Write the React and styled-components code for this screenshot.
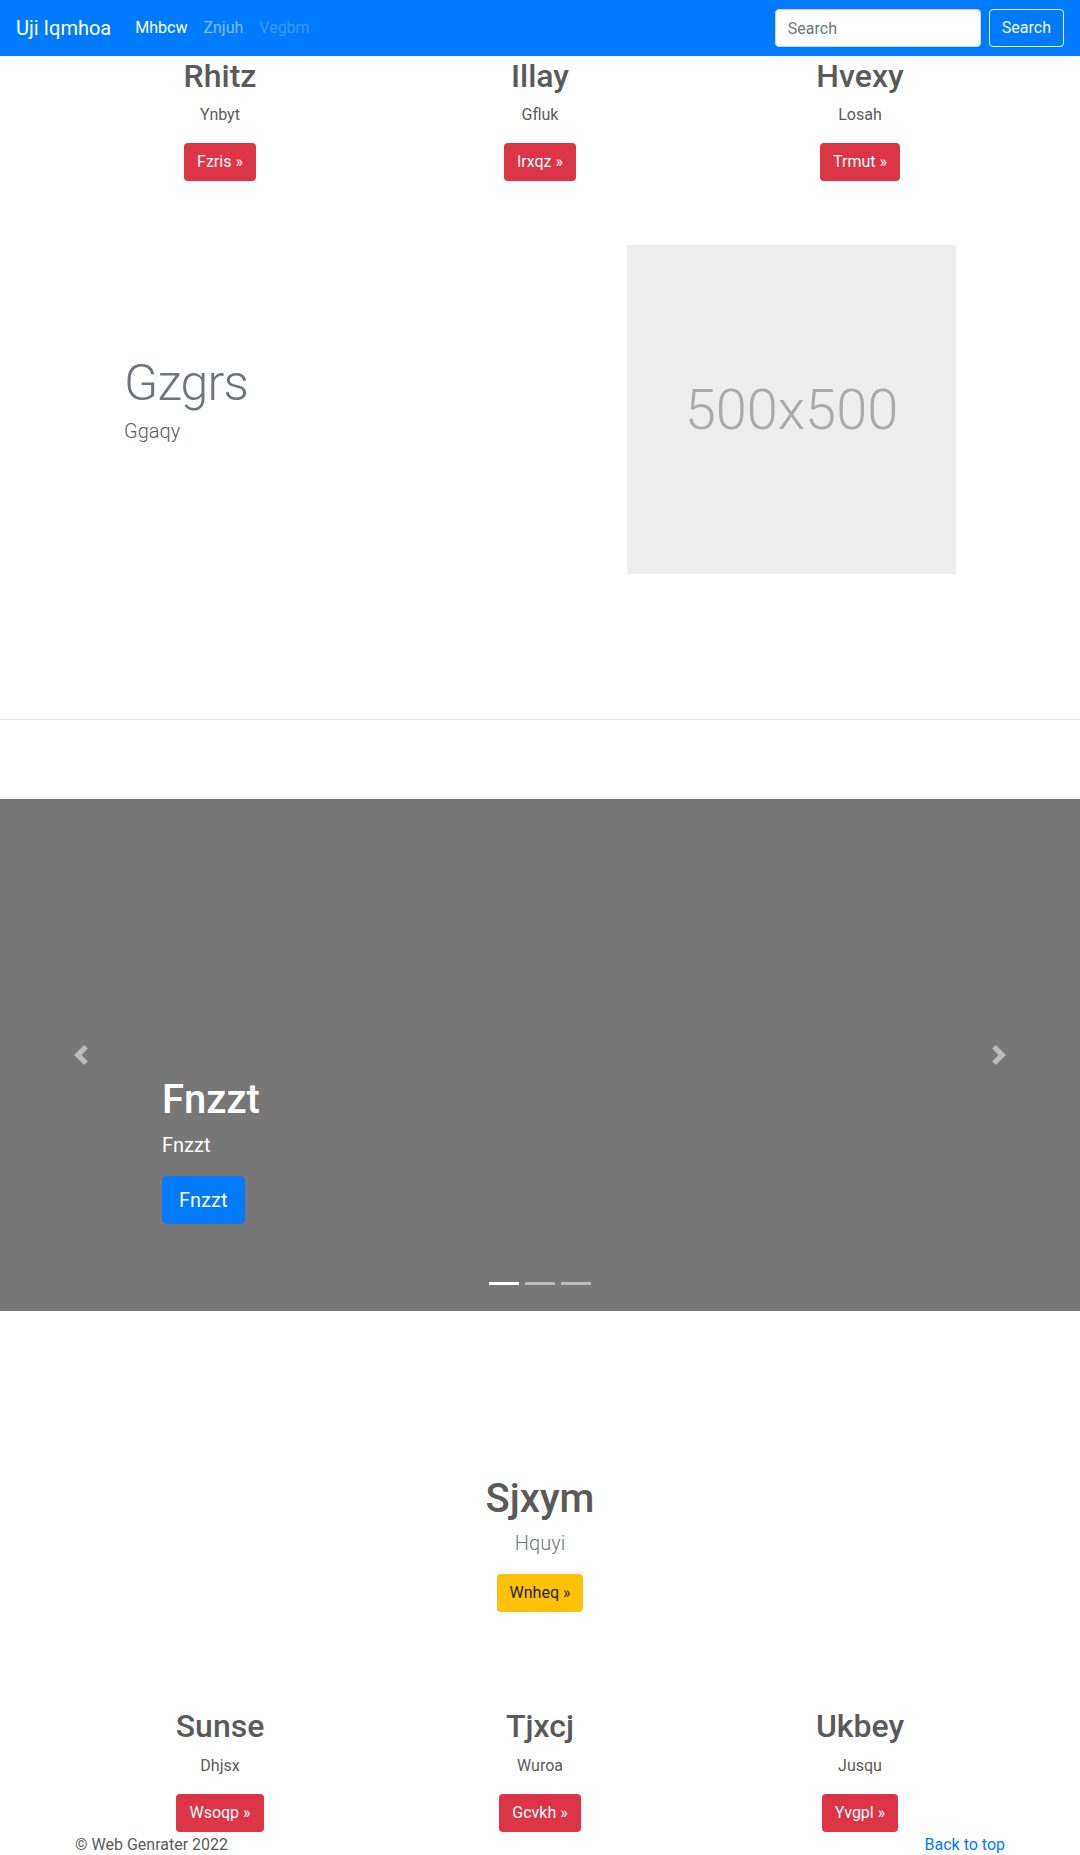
import React from "react";
import styled, { createGlobalStyle } from "styled-components";

const GlobalStyle = createGlobalStyle`
  * {
    box-sizing: border-box;
  }
  body {
    margin: 0;
    font-family: "Segoe UI", Roboto, "Helvetica Neue", Arial, sans-serif;
    font-size: 16px;
    line-height: 1.5;
    color: #5a5a5a;
    background: #fff;
  }
`;

const Navbar = styled.nav`
  display: flex;
  align-items: center;
  height: 56px;
  padding: 0 16px;
  background: #007bff;
`;

const Brand = styled.a`
  font-size: 20px;
  line-height: 30px;
  color: #fff;
  margin-right: 16px;
  text-decoration: none;
`;

const NavLink = styled.a`
  padding: 8px;
  color: ${(p) =>
    p.$state === "active"
      ? "#fff"
      : p.$state === "disabled"
      ? "rgba(255,255,255,.25)"
      : "rgba(255,255,255,.5)"};
  text-decoration: none;
`;

const SearchForm = styled.form`
  display: flex;
  gap: 8px;
  margin-left: auto;
`;

const SearchInput = styled.input`
  width: 206px;
  height: 38px;
  padding: 6px 12px;
  font: inherit;
  color: #495057;
  border: 1px solid #ced4da;
  border-radius: 4px;
  &::placeholder {
    color: #6c757d;
  }
`;

const OutlineButton = styled.button`
  height: 38px;
  padding: 6px 12px;
  font: inherit;
  color: #f8f9fa;
  background: transparent;
  border: 1px solid #f8f9fa;
  border-radius: 4px;
`;

const Container = styled.div`
  width: 960px;
  margin: 0 auto;
  padding: 0 15px;
`;

const Marketing = styled.div`
  display: grid;
  grid-template-columns: repeat(3, 1fr);
  margin: 0 -15px;
  padding-top: ${(p) => p.$top || 0}px;
  text-align: center;
`;

const Column = styled.div`
  padding: 0 15px;
  margin-bottom: ${(p) => (p.$last ? 0 : 24)}px;
`;

const ColTitle = styled.h2`
  margin: 0 0 8px;
  font-size: 32px;
  font-weight: 500;
  line-height: 1.2;
`;

const Text = styled.p`
  margin: 0 0 16px;
`;

const Button = styled.a`
  display: inline-block;
  padding: ${(p) => (p.$lg ? "8px 16px" : "6px 12px")};
  font-size: ${(p) => (p.$lg ? 20 : 16)}px;
  line-height: ${(p) => (p.$lg ? 30 : 24)}px;
  border: 1px solid transparent;
  border-radius: ${(p) => (p.$lg ? 4.8 : 4)}px;
  background: ${(p) => p.$bg};
  color: ${(p) => p.$fg || "#fff"};
  text-decoration: none;
`;

const Featurette = styled.div`
  display: flex;
  align-items: center;
  justify-content: space-between;
  padding: 0 49px;
  margin: 40px 0 145px;
`;

const FeaturetteHeading = styled.h2`
  margin: 0 0 8px;
  font-size: 50px;
  font-weight: 300;
  line-height: 1;
  letter-spacing: -0.8px;
  color: #6c757d;
`;

const Lead = styled.p`
  margin: 0 0 16px;
  font-size: 20px;
  font-weight: 300;
  color: ${(p) => p.$color || "#5a5a5a"};
`;

const Placeholder = styled.div`
  display: flex;
  align-items: center;
  justify-content: center;
  width: 329px;
  height: 329px;
  background: #eee;
  color: #aaa;
  font-size: 56px;
  font-weight: 300;
`;

const Divider = styled.hr`
  margin: 0 0 79px;
  border: 0;
  border-top: 1px solid rgba(0, 0, 0, 0.1);
`;

const Carousel = styled.div`
  position: relative;
  display: flex;
  align-items: flex-end;
  height: 512px;
  padding: 0 15% 87px;
  background: #777;
  color: #fff;
`;

const CaptionTitle = styled.h1`
  margin: 0 0 6px;
  font-size: 40px;
  font-weight: 500;
  line-height: 1.2;
`;

const CaptionText = styled.p`
  margin: 0 0 16px;
  font-size: 20px;
  line-height: 30px;
`;

const Control = styled.a`
  position: absolute;
  top: 0;
  bottom: 0;
  ${(p) => (p.$side === "prev" ? "left: 0;" : "right: 0;")}
  width: 15%;
  display: flex;
  align-items: center;
  justify-content: center;
  opacity: 0.5;
`;

const Indicators = styled.ol`
  position: absolute;
  left: 0;
  right: 0;
  bottom: 0;
  display: flex;
  justify-content: center;
  margin: 0 0 16px;
  padding: 0;
  list-style: none;
`;

const Indicator = styled.li`
  width: 30px;
  height: 23px;
  margin: 0 3px;
  border-top: 10px solid transparent;
  border-bottom: 10px solid transparent;
  background: #fff;
  background-clip: padding-box;
  opacity: ${(p) => (p.$active ? 1 : 0.5)};
`;

const Hero = styled.div`
  margin-top: 164px;
  margin-bottom: 95px;
  text-align: center;
`;

const HeroTitle = styled.h1`
  margin: 0 0 5px;
  font-size: 40px;
  font-weight: 500;
  line-height: 1.2;
`;

const Footer = styled.footer`
  display: flex;
  justify-content: space-between;
  padding-top: 1px;
`;

const FooterText = styled.p`
  margin: 0;
`;

const FooterLink = styled.a`
  color: #007bff;
  text-decoration: none;
`;

const Chevron = ({ dir }) => (
  <svg width="20" height="20" viewBox="0 0 8 8" fill="#fff">
    <path
      d={
        dir === "prev"
          ? "M5.25 0l-4 4 4 4 1.5-1.5L4.25 4l2.5-2.5L5.25 0z"
          : "M2.75 0l-1.5 1.5L3.75 4l-2.5 2.5L2.75 8l4-4-4-4z"
      }
    />
  </svg>
);

const topCols = [
  { title: "Rhitz", text: "Ynbyt", btn: "Fzris" },
  { title: "Illay", text: "Gfluk", btn: "Irxqz" },
  { title: "Hvexy", text: "Losah", btn: "Trmut" },
];

const bottomCols = [
  { title: "Sunse", text: "Dhjsx", btn: "Wsoqp" },
  { title: "Tjxcj", text: "Wuroa", btn: "Gcvkh" },
  { title: "Ukbey", text: "Jusqu", btn: "Yvgpl" },
];

const MarketingRow = ({ cols, top, last }) => (
  <Marketing $top={top}>
    {cols.map((c) => (
      <Column key={c.title} $last={last}>
        <ColTitle>{c.title}</ColTitle>
        <Text>{c.text}</Text>
        <Button $bg="#dc3545">{c.btn} &raquo;</Button>
      </Column>
    ))}
  </Marketing>
);

const App = () => {
  return (
    <>
      <GlobalStyle />
      <Navbar>
        <Brand>Uji Iqmhoa</Brand>
        <NavLink $state="active">Mhbcw</NavLink>
        <NavLink>Znjuh</NavLink>
        <NavLink $state="disabled">Vegbm</NavLink>
        <SearchForm onSubmit={(e) => e.preventDefault()}>
          <SearchInput placeholder="Search" />
          <OutlineButton>Search</OutlineButton>
        </SearchForm>
      </Navbar>

      <Container>
        <MarketingRow cols={topCols} top={1} />
        <Featurette>
          <div>
            <FeaturetteHeading>Gzgrs</FeaturetteHeading>
            <Lead>Ggaqy</Lead>
          </div>
          <Placeholder>500x500</Placeholder>
        </Featurette>
      </Container>

      <Divider />

      <Carousel>
        <div>
          <CaptionTitle>Fnzzt</CaptionTitle>
          <CaptionText>Fnzzt</CaptionText>
          <Button $lg $bg="#007bff">
            Fnzzt
          </Button>
        </div>
        <Control $side="prev">
          <Chevron dir="prev" />
        </Control>
        <Control $side="next">
          <Chevron dir="next" />
        </Control>
        <Indicators>
          <Indicator $active />
          <Indicator />
          <Indicator />
        </Indicators>
      </Carousel>

      <Container>
        <Hero>
          <HeroTitle>Sjxym</HeroTitle>
          <Lead $color="#6c757d">Hquyi</Lead>
          <Button $bg="#ffc107" $fg="#212529">
            Wnheq &raquo;
          </Button>
        </Hero>
        <MarketingRow cols={bottomCols} last />
        <Footer>
          <FooterText>&copy; Web Genrater 2022</FooterText>
          <FooterLink>Back to top</FooterLink>
        </Footer>
      </Container>
    </>
  );
};

export default App;
